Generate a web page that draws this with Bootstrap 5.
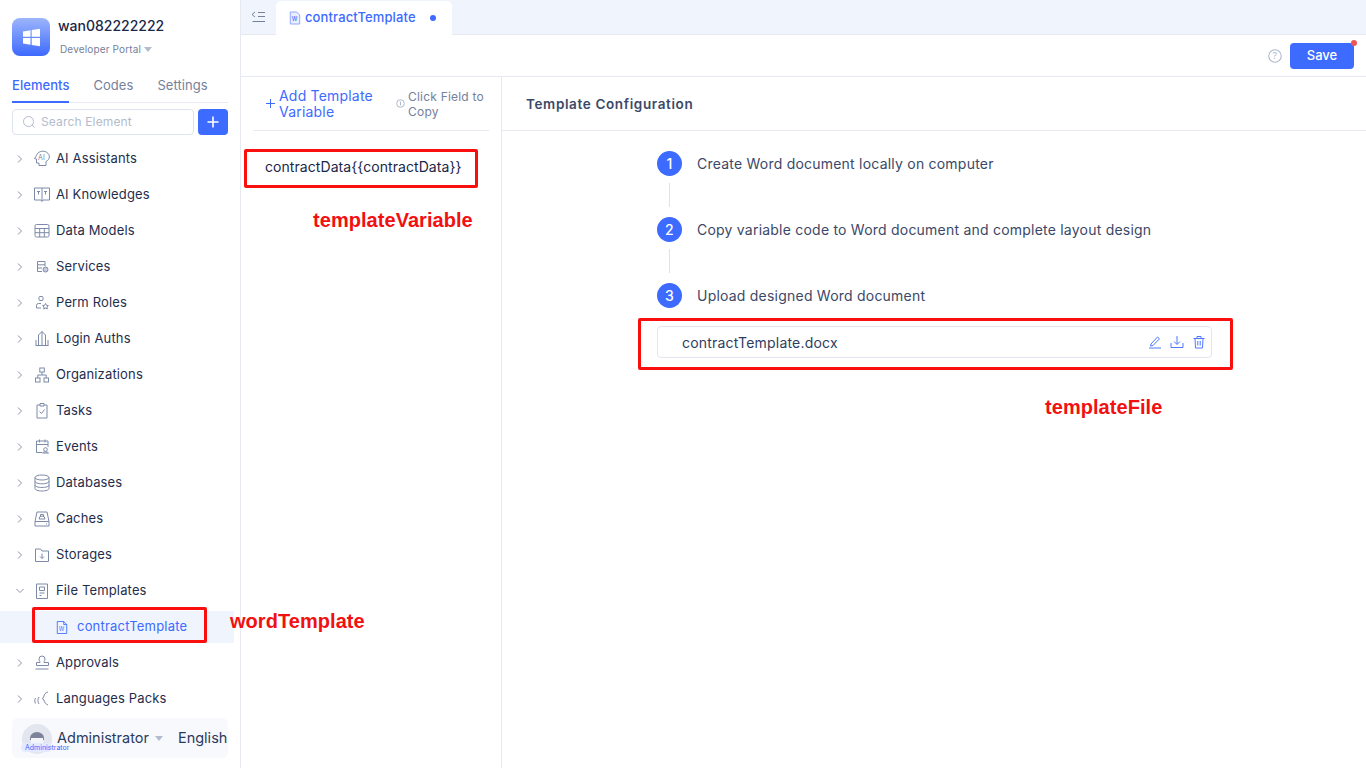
<!doctype html>
<html lang="en"><head><meta charset="utf-8"><title>contractTemplate</title>
<link href="https://cdn.jsdelivr.net/npm/bootstrap@5.3.0/dist/css/bootstrap.min.css" rel="stylesheet">
<style>
html,body{height:100%}
body{font-family:Inter,"Noto Sans",sans-serif;color:#1f2d4d;font-size:13px;overflow:hidden;background:#fff;position:relative}
.shell{height:768px}
.side{width:241px;flex:none;border-right:1px solid #e6e9f2;padding:18px 12px 0;position:relative}
.logo{width:38px;height:38px;border-radius:8px;background:linear-gradient(180deg,#9db5fb,#3d6aff)}
.brand-name{font-size:14px;font-weight:500;color:#1a2747;line-height:17px;margin-top:-1px}
.brand-sub{font-size:10px;color:#76819b;line-height:12px;margin-top:9px;margin-left:2px;letter-spacing:.15px}
.caret-d{display:inline-block;border-left:4.5px solid transparent;border-right:4.5px solid transparent;border-top:5px solid #b3bccd;margin-left:3px;vertical-align:1px}
.side-tabs{margin-top:21px;border-bottom:1px solid #e9ecf5;height:26px;gap:24px;font-size:13px;color:#76819b;letter-spacing:.05px}
.side-tabs span{line-height:17px;height:26px}
.side-tabs .on{color:#3d6aff;font-weight:500;border-bottom:2px solid #3d6aff}
.search-row{margin-top:6px}
.search-box{width:182px;height:26px;border:1px solid #dfe3ee;border-radius:4px;color:#b3bccd;font-size:12px;padding-left:9px;gap:5px;letter-spacing:.15px}
.add-btn{width:30px;height:26px;background:#3d6aff;border-radius:4px}
.tree{margin:6px -12px 0 0}
.tree-row{height:36px;color:#1f2d4d;font-size:13px;letter-spacing:.15px}
.chev{width:14px;flex:none;margin-left:3px}
.ti{width:20px;height:20px;flex:none;margin-left:3px;margin-right:4px}
.sel-row{height:32px;margin:2px 6px 2px -12px;background:#f0f4fd;color:#3d6aff;padding-left:56px;letter-spacing:.2px}
.sel-ic{margin-right:9px}
.foot{position:absolute;left:12px;top:718px;width:216px;height:40px;background:#f8f9fc;border-radius:6px;font-size:14.5px;color:#2b3a5e}
.avatar{position:absolute;left:10px;top:6px;width:30px;height:30px;border-radius:50%;background:#e6e9f2;overflow:hidden}
.avatar-tag{position:absolute;left:9px;top:25px;width:31px;height:9px;background:#e4eaff;border-radius:5px;color:#3d6aff;font-size:7px;line-height:9px;white-space:nowrap;padding-left:4px}
.foot-name{margin-left:45px}
.foot-caret{margin-left:6px}
.foot-lang{margin-left:15px}
.tabbar{height:35px;background:#f0f4fd;border-bottom:1px solid #e6e9f2}
.tab-collapse{margin:10px 0 0 10px}
.file-tab{width:176px;height:35px;margin-left:9px;margin-top:1px;padding:0 0 2px 13px;background:#fff;border-radius:5px 5px 0 0;color:#3d6aff;font-weight:500;font-size:13px;letter-spacing:.12px}
.tab-dot{width:6px;height:6px;border-radius:50%;background:#3d6aff;margin-left:14px}
.tool{height:42px;border-bottom:1px solid #e6e9f2;padding-right:12px}
.help-ic{margin-right:1px}
.save{width:64px;height:26px;background:#3d6aff;color:#fff;border-radius:4px;font-size:13px;font-weight:500;position:relative;padding:0;border:0;margin-left:7px}
.save i{position:absolute;right:-3px;top:-3px;width:6px;height:6px;border-radius:50%;background:#f25555}
.vars{width:261px;flex:none;border-right:1px solid #e6e9f2;padding:0 12px}
.vars-head{height:54px;border-bottom:1px solid #e6e9f2;padding-left:12px}
.plus-ic{margin-right:3px;flex:none}
.add-var{color:#3d6aff;font-size:14px;line-height:16px;width:126px;letter-spacing:.2px}
.info-ic{flex:none;margin-left:-3px}
.hint{color:#76819b;font-size:12px;line-height:15px;letter-spacing:.2px;margin-left:3px;width:85px}
.var-item{margin-top:22px;padding-left:12px;font-size:14px;line-height:28px;color:#1a2747;letter-spacing:.07px}
.conf-head{height:54px;border-bottom:1px solid #e6e9f2;padding:2px 0 0 24px;font-size:13.5px;font-weight:600;color:#3b4867;letter-spacing:.63px}
.steps{padding:19px 0 0 155px}
.step-no{width:25px;height:25px;border-radius:50%;background:#3d6aff;color:#fff;font-size:14px;font-weight:500;flex:none}
.step{height:26px;gap:15px;font-size:14px;color:#3b4867;letter-spacing:.22px}
.vline{width:1px;height:24px;background:#dbe3ee;margin:7px 0 9px 12px}
.doc{width:555px;height:32px;margin-top:18px;border:1px solid #e3e6f0;border-radius:4px;padding:0 5px 0 24px;font-size:14px;color:#2f3d60;letter-spacing:.2px}
.ann-box{position:absolute;border:3px solid #fa0f0f;border-radius:2px;pointer-events:none}
.ann-txt{position:absolute;color:#f21010;font-family:"Liberation Sans",Arial,sans-serif;font-weight:700;font-size:20px;line-height:24px;white-space:nowrap;letter-spacing:.05px}
.a1{left:244px;top:149px;width:234px;height:39px}
.a2{left:638px;top:318px;width:595px;height:52px}
.a3{left:32px;top:607px;width:175px;height:36px}
.t1{left:313px;top:208px}
.t2{left:1045px;top:395px}
.t3{left:230px;top:609px}
</style></head><body>
<div class="d-flex shell">
<aside class="side">
  <div class="d-flex gap-2">
    <div class="logo d-flex align-items-center justify-content-center"><svg width="19" height="19" viewBox="0 0 19 19"><path fill="#fff" d="M1 3.500l7.500-1.200v6.500H1zM9.700 2.100L18 .8v8H9.700zM1 10h7.500v6.700L1 15.500zM9.700 10H18v8.200l-8.300-1.300z"/></svg></div>
    <div><div class="brand-name">wan082222222</div><div class="brand-sub">Developer Portal<span class="caret-d"></span></div></div>
  </div>
  <div class="d-flex side-tabs"><span class="on">Elements</span><span>Codes</span><span>Settings</span></div>
  <div class="d-flex gap-1 search-row">
    <div class="search-box d-flex align-items-center"><svg width="14" height="14" viewBox="0 0 14 14" fill="none" stroke="#b3bccd"><circle cx="6.500" cy="6.500" r="5"/><path d="M10 10l2.500 2.500"/></svg>Search Element</div>
    <div class="add-btn d-flex align-items-center justify-content-center"><svg width="12" height="12" viewBox="0 0 12 12" stroke="#fff" stroke-width="1.6"><path d="M6 .5v11M.5 6h11"/></svg></div>
  </div>
  <div class="tree">
    <div class="tree-row d-flex align-items-center"><svg class="chev" width="14" height="10" viewBox="0 0 14 10" fill="none" stroke="#8a94ab"><path d="M3 1.500L6.500 5 3 8.500"/></svg><svg class="ti" viewBox="0 0 20 20" fill="none" stroke="#7d8aa8"><path d="M4.500 6.500a6.500 5.500 0 1 1 9.500 6V16.500H7V14H4.500v-4L2.500 9.500z"/><text x="6" y="10.500" font-size="7" fill="#7d8aa8" stroke="none" font-family="Inter">AI</text></svg>AI Assistants</div>
    <div class="tree-row d-flex align-items-center"><svg class="chev" width="14" height="10" viewBox="0 0 14 10" fill="none" stroke="#8a94ab"><path d="M3 1.500L6.500 5 3 8.500"/></svg><svg class="ti" viewBox="0 0 20 20" fill="none" stroke="#7d8aa8"><path d="M2.500 3h15v12H11l-1 1.500L9 15H2.500zM10 3v12M5 6.500h3M6.500 6.500v3M12 6.500h3M13.500 6.500v3"/></svg>AI Knowledges</div>
    <div class="tree-row d-flex align-items-center"><svg class="chev" width="14" height="10" viewBox="0 0 14 10" fill="none" stroke="#8a94ab"><path d="M3 1.500L6.500 5 3 8.500"/></svg><svg class="ti" viewBox="0 0 20 20" fill="none" stroke="#7d8aa8"><rect x="3" y="3.500" width="14" height="12.500" rx="1.500"/><path d="M3 7.500h14M3 11.700h14M7.700 7.500V16M12.300 7.500V16"/></svg>Data Models</div>
    <div class="tree-row d-flex align-items-center"><svg class="chev" width="14" height="10" viewBox="0 0 14 10" fill="none" stroke="#8a94ab"><path d="M3 1.500L6.500 5 3 8.500"/></svg><svg class="ti" viewBox="0 0 20 20" fill="none" stroke="#7d8aa8"><path d="M10 14.500H5.500v-10h7.500V9M5.500 7.800H13M5.500 11h4.500"/><circle cx="13.500" cy="12.500" r="2.500" fill="#c5cddd"/></svg>Services</div>
    <div class="tree-row d-flex align-items-center"><svg class="chev" width="14" height="10" viewBox="0 0 14 10" fill="none" stroke="#8a94ab"><path d="M3 1.500L6.500 5 3 8.500"/></svg><svg class="ti" viewBox="0 0 20 20" fill="none" stroke="#7d8aa8"><rect x="7" y="3.500" width="4" height="4" rx="1"/><path d="M9 10.500H6.500A2 2 0 0 0 4.500 12.500V15H9M13.500 10.500l.9 1.800 2 .3-1.500 1.400.4 2-1.800-1-1.800 1 .4-2-1.500-1.400 2-.3z"/></svg>Perm Roles</div>
    <div class="tree-row d-flex align-items-center"><svg class="chev" width="14" height="10" viewBox="0 0 14 10" fill="none" stroke="#8a94ab"><path d="M3 1.500L6.500 5 3 8.500"/></svg><svg class="ti" viewBox="0 0 20 20" fill="none" stroke="#7d8aa8"><path d="M6.500 16.500V6L10 2.500 13.500 6v10.500M10 2.500v14M3.500 16.500h13M4 11v5.500M16 11v5.500"/></svg>Login Auths</div>
    <div class="tree-row d-flex align-items-center"><svg class="chev" width="14" height="10" viewBox="0 0 14 10" fill="none" stroke="#8a94ab"><path d="M3 1.500L6.500 5 3 8.500"/></svg><svg class="ti" viewBox="0 0 20 20" fill="none" stroke="#7d8aa8"><rect x="7.800" y="3" width="4.500" height="4"/><rect x="3.500" y="13" width="4.500" height="4"/><rect x="12" y="13" width="4.500" height="4"/><path d="M10 7v3M5.800 13v-3h8.400v3"/></svg>Organizations</div>
    <div class="tree-row d-flex align-items-center"><svg class="chev" width="14" height="10" viewBox="0 0 14 10" fill="none" stroke="#8a94ab"><path d="M3 1.500L6.500 5 3 8.500"/></svg><svg class="ti" viewBox="0 0 20 20" fill="none" stroke="#7d8aa8"><path d="M8 4H5v13h10V4h-3M8 2.500h4V5H8zM7.500 10.500l2 2 3-4"/></svg>Tasks</div>
    <div class="tree-row d-flex align-items-center"><svg class="chev" width="14" height="10" viewBox="0 0 14 10" fill="none" stroke="#8a94ab"><path d="M3 1.500L6.500 5 3 8.500"/></svg><svg class="ti" viewBox="0 0 20 20" fill="none" stroke="#7d8aa8"><path d="M10 15.500H4.500V4h11.500v6M4.500 7.500H16M7.500 2.500v3M13 2.500v3"/><circle cx="13.500" cy="12.500" r="1.800"/><path d="M10.500 16c.5-1.500 5.500-1.500 6 0z"/></svg>Events</div>
    <div class="tree-row d-flex align-items-center"><svg class="chev" width="14" height="10" viewBox="0 0 14 10" fill="none" stroke="#8a94ab"><path d="M3 1.500L6.500 5 3 8.500"/></svg><svg class="ti" viewBox="0 0 20 20" fill="none" stroke="#7d8aa8"><ellipse cx="10" cy="4.500" rx="7" ry="2.500"/><path d="M3 4.500v11c0 1.400 3 2.500 7 2.500s7-1.100 7-2.500v-11M3 8.300c0 1.400 3 2.500 7 2.500s7-1.100 7-2.500M3 12c0 1.400 3 2.500 7 2.500s7-1.100 7-2.500"/></svg>Databases</div>
    <div class="tree-row d-flex align-items-center"><svg class="chev" width="14" height="10" viewBox="0 0 14 10" fill="none" stroke="#8a94ab"><path d="M3 1.500L6.500 5 3 8.500"/></svg><svg class="ti" viewBox="0 0 20 20" fill="none" stroke="#7d8aa8"><path d="M5 3h10l2 9.500H3zM3 12.500h14V17H3zM7 10a3 3 0 0 1 6 0zM8.500 7V5.500h3V7M14 14.800h1"/></svg>Caches</div>
    <div class="tree-row d-flex align-items-center"><svg class="chev" width="14" height="10" viewBox="0 0 14 10" fill="none" stroke="#8a94ab"><path d="M3 1.500L6.500 5 3 8.500"/></svg><svg class="ti" viewBox="0 0 20 20" fill="none" stroke="#7d8aa8"><path d="M3.500 4h5l1.500 2h6.500v10.500h-13zM10 8.500v5M8 11.500l2 2 2-2"/></svg>Storages</div>
    <div class="tree-row d-flex align-items-center"><svg class="chev" width="14" height="10" viewBox="0 0 14 10" fill="none" stroke="#8a94ab"><path d="M1.500 3L5 6.500 8.500 3"/></svg><svg class="ti" viewBox="0 0 20 20" fill="none" stroke="#7d8aa8"><path d="M4.500 3h11v14.500h-11zM7.500 6h5v3.500h-5zM7.500 12h5M7.500 14.500h2"/></svg>File Templates</div>
    <div class="sel-row d-flex align-items-center"><svg class="sel-ic" width="12" height="15" viewBox="0 0 14 16" fill="none" stroke="#3d6aff"><path d="M1.500 1h7.500l3.500 3.500V15h-11zM9 1v3.500h3.500"/><text x="3.200" y="12" font-size="6.500" fill="#3d6aff" stroke="none" font-family="Inter">W</text></svg>contractTemplate</div>
    <div class="tree-row d-flex align-items-center"><svg class="chev" width="14" height="10" viewBox="0 0 14 10" fill="none" stroke="#8a94ab"><path d="M3 1.500L6.500 5 3 8.500"/></svg><svg class="ti" viewBox="0 0 20 20" fill="none" stroke="#7d8aa8"><path d="M8 9.500c.5-1-1-1.500-1-3.500a3 3 0 0 1 6 0c0 2-1.500 2.500-1 3.500h4.500v3h-12v-3zM3.500 16h13"/></svg>Approvals</div>
    <div class="tree-row d-flex align-items-center"><svg class="chev" width="14" height="10" viewBox="0 0 14 10" fill="none" stroke="#8a94ab"><path d="M3 1.500L6.500 5 3 8.500"/></svg><svg class="ti" viewBox="0 0 20 20" fill="none" stroke="#7d8aa8"><path d="M16 3c-2.500.500-4 2.500-4 4l-1.500 3 1.500 1c0 2.500 2 4 4 5M3.500 9c-1 2-1 3.500 0 5.500M7 8c-1.500 2-1.500 5 0 7"/></svg>Languages Packs</div>
  </div>
  <div class="foot">
    <div class="avatar"><svg width="30" height="30" viewBox="0 0 30 30"><circle cx="15" cy="15" r="15" fill="#e3e6ee"/><path d="M8 14a7 6 0 0 1 14 0v2H8z" fill="#7d8499"/><path d="M9 14h12v10H9z" fill="#f4f5f9"/></svg></div>
    <div class="avatar-tag">Administrator</div>
    <div class="d-flex align-items-center h-100"><span class="foot-name">Administrator</span><span class="caret-d foot-caret"></span><span class="foot-lang">English</span></div>
  </div>
</aside>
<main class="flex-grow-1 d-flex flex-column">
  <div class="tabbar d-flex">
    <svg class="tab-collapse" width="16" height="14" viewBox="0 0 16 14" fill="none" stroke="#76819b"><path d="M4 2L1 4.500 4 7M7 2.500h7M7 6.500h7M1.500 11.500h12.500"/></svg>
    <div class="file-tab d-flex align-items-center"><svg class="me-1" width="12" height="14" viewBox="0 0 14 16" fill="#e9efff" stroke="#7f9dff"><path d="M1.500 1h7.500l3.500 3.500V15h-11z"/><text x="3.200" y="12" font-size="6.500" fill="#3d6aff" stroke="none" font-family="Inter">W</text></svg>contractTemplate<span class="tab-dot"></span></div>
  </div>
  <div class="tool d-flex align-items-center justify-content-end"><svg class="help-ic" width="14" height="14" viewBox="0 0 13 13" fill="none" stroke="#aeb8cb"><circle cx="6.500" cy="6.500" r="5.800"/><text x="4.200" y="9.500" font-size="8" fill="#aeb8cb" stroke="none" font-family="Inter">?</text></svg><button class="save btn">Save<i></i></button></div>
  <div class="d-flex flex-grow-1">
    <div class="vars">
      <div class="vars-head d-flex align-items-center">
        <svg class="plus-ic" width="11" height="11" viewBox="0 0 11 11" stroke="#3d6aff"><path d="M5.500 1v9M1 5.500h9"/></svg>
        <div class="add-var">Add Template Variable</div>
        <svg class="info-ic" width="9" height="9" viewBox="0 0 9 9" fill="none" stroke="#aeb8cb"><circle cx="4.500" cy="4.500" r="3.800"/><path d="M4.500 2.500v4"/></svg>
        <div class="hint">Click Field to Copy</div>
      </div>
      <div class="var-item">contractData{{contractData}}</div>
    </div>
    <div class="flex-grow-1">
      <div class="conf-head d-flex align-items-center">Template Configuration</div>
      <div class="steps">
        <div class="step d-flex align-items-center"><span class="step-no d-flex align-items-center justify-content-center">1</span>Create Word document locally on computer</div>
        <div class="vline"></div>
        <div class="step d-flex align-items-center"><span class="step-no d-flex align-items-center justify-content-center">2</span>Copy variable code to Word document and complete layout design</div>
        <div class="vline"></div>
        <div class="step d-flex align-items-center"><span class="step-no d-flex align-items-center justify-content-center">3</span>Upload designed Word document</div>
        <div class="doc d-flex align-items-center"><span class="flex-grow-1">contractTemplate.docx</span>
          <svg width="14" height="14" viewBox="0 0 14 14" fill="none" stroke="#4d78ff"><path d="M3 9l6.500-7 2 1.800L5 10.500l-2.500.5zM1 13h12"/></svg>
          <svg class="ms-2" width="14" height="14" viewBox="0 0 14 14" fill="none" stroke="#4d78ff"><path d="M7 1v8M4 6.500L7 9.500l3-3M1 8v4.500h12V8"/></svg>
          <svg class="ms-2" width="14" height="14" viewBox="0 0 14 14" fill="none" stroke="#4d78ff"><path d="M1.500 3.500h11M5 3.500V1.500h4v2M3 3.500l.5 9.500h7l.5-9.500M5.800 6v4.500M8.200 6v4.500"/></svg>
        </div>
      </div>
    </div>
  </div>
</main>
</div>
<div class="ann-box a1"></div><div class="ann-box a2"></div><div class="ann-box a3"></div>
<div class="ann-txt t1">templateVariable</div><div class="ann-txt t2">templateFile</div><div class="ann-txt t3">wordTemplate</div>
</body></html>
